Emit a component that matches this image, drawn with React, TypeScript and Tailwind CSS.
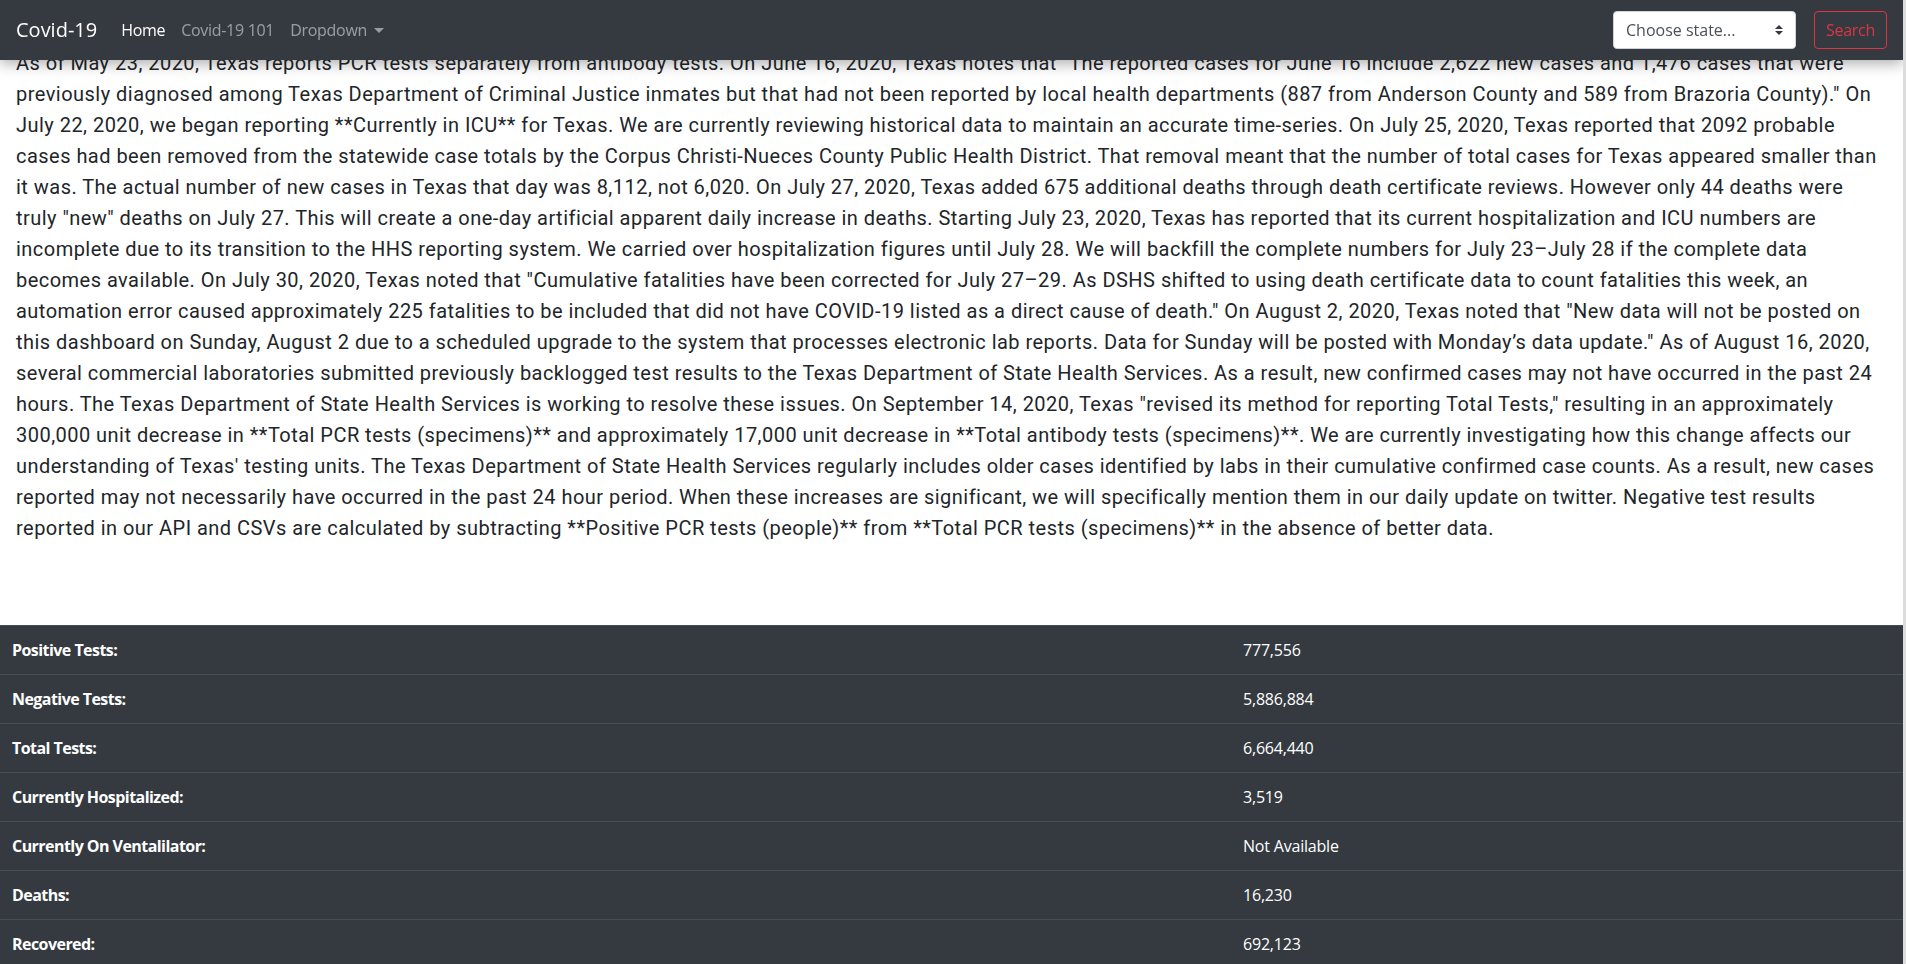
import React from 'react';

const notes: string[] = [
  'As of May 23, 2020, Texas reports PCR tests separately from antibody tests. On June 16, 2020, Texas notes that "The reported cases for June 16 include 2,622 new cases and 1,476 cases that were',
  'previously diagnosed among Texas Department of Criminal Justice inmates but that had not been reported by local health departments (887 from Anderson County and 589 from Brazoria County)." On',
  'July 22, 2020, we began reporting **Currently in ICU** for Texas. We are currently reviewing historical data to maintain an accurate time-series. On July 25, 2020, Texas reported that 2092 probable',
  'cases had been removed from the statewide case totals by the Corpus Christi-Nueces County Public Health District. That removal meant that the number of total cases for Texas appeared smaller than',
  'it was. The actual number of new cases in Texas that day was 8,112, not 6,020. On July 27, 2020, Texas added 675 additional deaths through death certificate reviews. However only 44 deaths were',
  'truly "new" deaths on July 27. This will create a one-day artificial apparent daily increase in deaths. Starting July 23, 2020, Texas has reported that its current hospitalization and ICU numbers are',
  'incomplete due to its transition to the HHS reporting system. We carried over hospitalization figures until July 28. We will backfill the complete numbers for July 23\u2013July 28 if the complete data',
  'becomes available. On July 30, 2020, Texas noted that "Cumulative fatalities have been corrected for July 27\u201329. As DSHS shifted to using death certificate data to count fatalities this week, an',
  'automation error caused approximately 225 fatalities to be included that did not have COVID-19 listed as a direct cause of death." On August 2, 2020, Texas noted that "New data will not be posted on',
  'this dashboard on Sunday, August 2 due to a scheduled upgrade to the system that processes electronic lab reports. Data for Sunday will be posted with Monday\u2019s data update." As of August 16, 2020,',
  'several commercial laboratories submitted previously backlogged test results to the Texas Department of State Health Services. As a result, new confirmed cases may not have occurred in the past 24',
  'hours. The Texas Department of State Health Services is working to resolve these issues. On September 14, 2020, Texas "revised its method for reporting Total Tests," resulting in an approximately',
  '300,000 unit decrease in **Total PCR tests (specimens)** and approximately 17,000 unit decrease in **Total antibody tests (specimens)**. We are currently investigating how this change affects our',
  "understanding of Texas' testing units. The Texas Department of State Health Services regularly includes older cases identified by labs in their cumulative confirmed case counts. As a result, new cases",
  'reported may not necessarily have occurred in the past 24 hour period. When these increases are significant, we will specifically mention them in our daily update on twitter. Negative test results',
  'reported in our API and CSVs are calculated by subtracting **Positive PCR tests (people)** from **Total PCR tests (specimens)** in the absence of better data.',
];

const stats: { label: string; value: string }[] = [
  { label: 'Positive Tests:', value: '777,556' },
  { label: 'Negative Tests:', value: '5,886,884' },
  { label: 'Total Tests:', value: '6,664,440' },
  { label: 'Currently Hospitalized:', value: '3,519' },
  { label: 'Currently On Ventalilator:', value: 'Not Available' },
  { label: 'Deaths:', value: '16,230' },
  { label: 'Recovered:', value: '692,123' },
];

const NavBar = () => (
  <nav className="fixed top-0 left-0 right-[3px] z-10 h-[60px] bg-[#343a40] flex items-center pl-4 pr-4 shadow-[0_3px_14px_rgba(0,0,0,0.35)] font-['Open_Sans',sans-serif]">
    <a className="text-[20px] text-white mr-4 leading-[30px]">Covid-19</a>
    <ul className="flex items-center text-[16px] tracking-[-0.3px]">
      <li className="px-2 text-white">Home</li>
      <li className="px-2 text-white/50">Covid-19 101</li>
      <li className="px-2 text-white/50 flex items-center">
        Dropdown
        <span className="ml-[7px] inline-block w-0 h-0 border-x-[5px] border-x-transparent border-t-[5px] border-t-white/50" />
      </li>
    </ul>
    {/* state picker + search */}
    <form className="ml-auto flex items-center gap-[18px]">
      <div className="w-[183px] h-[38px] bg-white rounded border border-[#ced4da] flex items-center justify-between pl-3 pr-3 text-[16px] text-[#495057]">
        <span>Choose state...</span>
        <svg width="8" height="10" viewBox="0 0 4 5">
          <path fill="#343a40" d="M2 0L0 2h4zm0 5L0 3h4z" />
        </svg>
      </div>
      <button type="button" className="w-[73px] h-[38px] flex items-center justify-center rounded border border-[#dc3545] text-[#dc3545] text-[16px] tracking-[-0.3px]">
        Search
      </button>
    </form>
  </nav>
);

export default function App() {
  return (
    <div className="min-h-screen bg-white pr-[3px]">
      <NavBar />
      <div className="fixed top-0 right-0 z-20 h-screen w-[3px] bg-[#dcdcdc]" />

      <p className="pt-[48px] px-4 text-[20px] leading-[31px] tracking-[0.47px] text-[#212529] font-['Roboto',sans-serif]">
        {notes.map((line, i) => (
          <span key={i} className="block whitespace-nowrap">
            {line}
          </span>
        ))}
      </p>

      <table className="mt-[81px] w-full bg-[#343a40] text-white text-[16px] leading-6 font-['Open_Sans',sans-serif]">
        <tbody>
          {stats.map((s) => (
            <tr key={s.label}>
              <th className="w-[1231px] p-3 text-left font-bold tracking-[-0.55px] border-t border-[#454d55]">{s.label}</th>
              <td className="p-3 tracking-[-0.2px] border-t border-[#454d55]">{s.value}</td>
            </tr>
          ))}
        </tbody>
      </table>
    </div>
  );
}
